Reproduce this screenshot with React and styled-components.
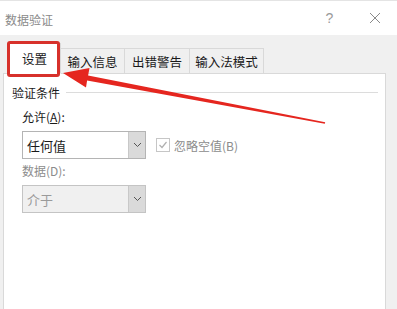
import React from "react"
import styled, { createGlobalStyle } from "styled-components"

const GlobalStyle = createGlobalStyle`
  html, body {
    margin: 0;
    padding: 0;
    overflow: hidden;
  }
  body {
    font-family: "Noto Sans CJK SC", "Noto Sans", sans-serif;
  }
`

const Dialog = styled.div`
  position: relative;
  width: 397px;
  height: 309px;
  background: #f0f0f0;
  display: flex;
  flex-direction: column;
  overflow: hidden;
`

const TitleBar = styled.div`
  height: 35px;
  flex: none;
  background: #fff;
  display: flex;
  align-items: center;
  padding: 0 0 0 5px;
  border-top: 1px solid #e4e4e4;
  box-sizing: border-box;
`

const Title = styled.div`
  flex: 1;
  font-size: 12px;
  color: #8a8a8a;
  line-height: 1;
  margin-top: 3px;
`

const TitleButton = styled.div`
  width: 45px;
  height: 35px;
  display: flex;
  align-items: center;
  justify-content: center;
  color: #9a9a9a;
  font-family: "Liberation Sans", sans-serif;
  font-size: 14px;
`

const Body = styled.div`
  flex: 1;
  display: flex;
  flex-direction: column;
  padding: 7px 11px 0 3px;
`

const TabRow = styled.div`
  display: flex;
  align-items: flex-end;
  height: 31px;
  padding-left: 5px;
  position: relative;
  z-index: 1;
`

const Tab = styled.div`
  width: ${(p) => p.$w}px;
  height: ${(p) => (p.$active ? "31px" : "25px")};
  box-sizing: border-box;
  background: ${(p) => (p.$active ? "#fff" : "#f0f0f0")};
  border: 1px solid #d9d9d9;
  border-bottom: ${(p) => (p.$active ? "1px solid #fff" : "none")};
  margin-right: -1px;
  margin-bottom: ${(p) => (p.$active ? "-1px" : "0")};
  display: flex;
  align-items: center;
  justify-content: center;
  font-size: 12.5px;
  color: #1a1a1a;
`

const Panel = styled.div`
  flex: 1;
  background: #fff;
  border: 1px solid #d9d9d9;
  border-bottom: none;
  padding: 10px 0 0 8px;
`

const GroupHead = styled.div`
  display: flex;
  align-items: center;
  gap: 6px;
  font-size: 12px;
  color: #1a1a1a;
  margin-right: 7px;

  &::after {
    content: "";
    flex: 1;
    height: 1px;
    background: #dcdcdc;
  }
`

const Fields = styled.div`
  padding: 8px 0 0 10px;
  display: flex;
  flex-direction: column;
`

const Label = styled.div`
  font-size: 12px;
  color: ${(p) => (p.$disabled ? "#8c8c8c" : "#1a1a1a")};
  margin-bottom: 6px;
  line-height: 16px;
`

const Row = styled.div`
  display: flex;
  align-items: center;
  gap: 10px;
  margin-bottom: 4px;
`

const Select = styled.div`
  width: 124px;
  height: 28px;
  box-sizing: border-box;
  border: 1px solid ${(p) => (p.$disabled ? "#c4c4c4" : "#b4b4b4")};
  background: ${(p) => (p.$disabled ? "#f0f0f0" : "#fff")};
  display: flex;
  align-items: stretch;
`

const SelectValue = styled.div`
  flex: 1;
  display: flex;
  align-items: center;
  padding-left: 4px;
  font-size: 13px;
  color: ${(p) => (p.$disabled ? "#9a9a9a" : "#1a1a1a")};
`

const DropButton = styled.div`
  width: 16px;
  background: #dadada;
  border-left: 1px solid #c8c8c8;
  display: flex;
  align-items: center;
  justify-content: center;
`

const Check = styled.label`
  display: flex;
  align-items: center;
  gap: 4px;
  font-size: 12px;
  color: #8c8c8c;
`

const Box = styled.span`
  width: 12px;
  height: 12px;
  border: 1px solid #c6c6c6;
  display: flex;
  align-items: center;
  justify-content: center;
`

const Highlight = styled.div`
  position: absolute;
  left: 7px;
  top: 41px;
  width: 53px;
  height: 36px;
  box-sizing: border-box;
  border: 3px solid #d7312b;
  border-radius: 3px;
  z-index: 2;
`

const ArrowLayer = styled.svg`
  position: absolute;
  left: 0;
  top: 0;
  z-index: 3;
  pointer-events: none;
`

const Chevron = () => (
  <svg width="9" height="6" viewBox="0 0 9 6">
    <path d="M1 1 L4.5 4.5 L8 1" fill="none" stroke="#555" strokeWidth="1" />
  </svg>
)

const Dropdown = ({ value, disabled }) => (
  <Select $disabled={disabled}>
    <SelectValue $disabled={disabled}>{value}</SelectValue>
    <DropButton>
      <Chevron />
    </DropButton>
  </Select>
)

export default function App() {
  return (
    <>
      <GlobalStyle />
      <Dialog>
        <TitleBar>
          <Title>数据验证</Title>
          <TitleButton>?</TitleButton>
          <TitleButton>
            <svg width="12" height="12" viewBox="0 0 12 12">
              <path d="M1 1 L11 11 M11 1 L1 11" stroke="#8a8a8a" strokeWidth="1" />
            </svg>
          </TitleButton>
        </TitleBar>
        <Body>
          <TabRow>
            <Tab $active $w={53}>设置</Tab>
            <Tab $w={65}>输入信息</Tab>
            <Tab $w={66}>出错警告</Tab>
            <Tab $w={75}>输入法模式</Tab>
          </TabRow>
          <Panel>
            <GroupHead>验证条件</GroupHead>
            <Fields>
              <Label>允许(<u>A</u>):</Label>
              <Row>
                <Dropdown value="任何值" />
                <Check>
                  <Box>
                    <svg width="10" height="10" viewBox="0 0 10 10">
                      <path d="M1.5 5 L4 7.5 L8.5 2" fill="none" stroke="#b0b0b0" strokeWidth="1.2" />
                    </svg>
                  </Box>
                  忽略空值(B)
                </Check>
              </Row>
              <Label $disabled>数据(D):</Label>
              <Row>
                <Dropdown value="介于" disabled />
              </Row>
            </Fields>
          </Panel>
        </Body>
        <Highlight />
        <ArrowLayer width="397" height="309" viewBox="0 0 397 309">
          <polygon
            points="63,73 89.5,68 88.1,75.5 325.2,122.2 324.8,123.8 87.1,80.6 86,87.5"
            fill="#e5261f"
          />
        </ArrowLayer>
      </Dialog>
    </>
  )
}
